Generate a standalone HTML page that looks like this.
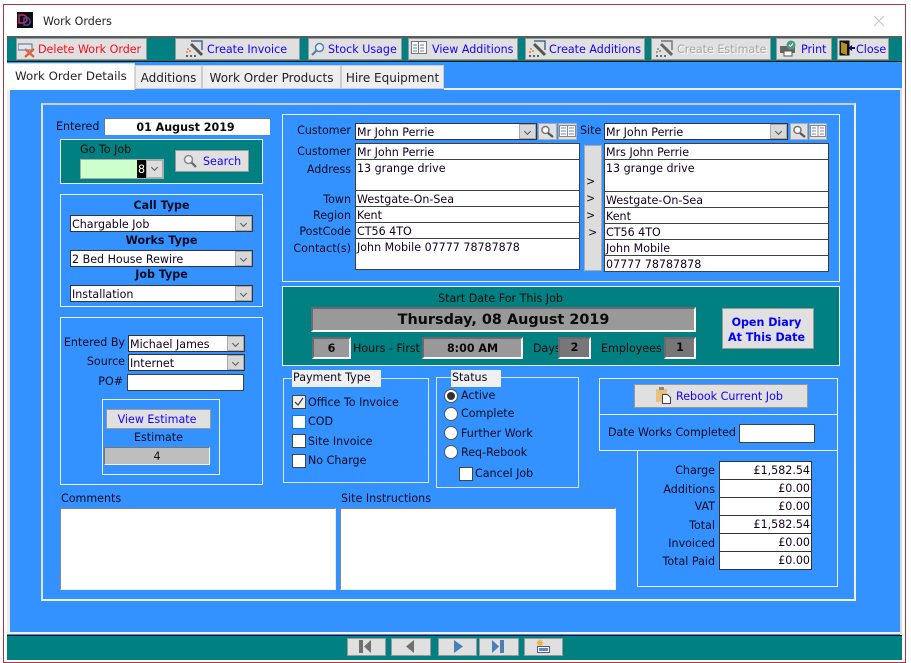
<!DOCTYPE html>
<html><head><meta charset="utf-8"><title>Work Orders</title>
<style>
html,body{margin:0;padding:0;background:#fff;}
body{width:911px;height:663px;position:relative;overflow:hidden;font:11.1px "DejaVu Sans","Liberation Sans",sans-serif;color:#0a0a20;}
div,svg{position:absolute;box-sizing:border-box;}
.t{white-space:nowrap;line-height:16px;height:16px;margin-top:1px;}
.r{text-align:right;}
.c{text-align:center;}
.bd{font-weight:bold;}
.btn{background:#e0e0e0;border:1px solid #999;color:#1400ff;white-space:nowrap;line-height:22px;}
.box{border:1px solid #eef2f8;}
.f{background:#fff;border:1px solid #404040;padding-left:1px;line-height:17px;white-space:nowrap;color:#100020;}
.cmb{background:#fff;border:1px solid #333;padding-left:1px;line-height:18px;white-space:nowrap;color:#100020;}
.arr{background:#d8d8d8;border:1px solid #aaa;right:0;top:0;bottom:0;width:17px;}
.arr:after{content:"";position:absolute;left:5px;top:4px;width:4px;height:4px;border-right:1px solid #555;border-bottom:1px solid #555;transform:rotate(45deg);}
.sm{background:#e0e0e0;border:1px solid #aaa;}
.g{background:#999;border:2px solid;border-color:#6a6a6a #fff #fff #6a6a6a;color:#0a0a0a;font-weight:bold;text-align:center;}
.chk{width:14px;height:14px;background:#fff;border:1px solid #444;}
.rad{width:14px;height:14px;background:#fff;border:1px solid #555;border-radius:50%;}
.tab{background:#eee;border:1px solid #ccc;text-align:center;font-size:12px;line-height:24px;color:#222;white-space:nowrap;}
.nav{background:#e0e0e0;border:1px solid #999;top:638px;height:18px;}
.fr{background:#fff;border:1px solid #333;text-align:right;padding-right:1px;line-height:18px;color:#100020;}
</style></head><body>

<!-- window frame -->
<div style="left:3px;top:4px;width:903px;height:659px;border:1px solid #a83a3f;background:#fff"></div>
<svg style="left:17px;top:12px" width="16" height="16" viewBox="0 0 16 16"><rect width="16" height="16" fill="#0c0c14"/><path d="M2 3h4a4 4 0 0 1 0 8H2z" fill="none" stroke="#c82a6a" stroke-width="1.5"/><path d="M7 6h4a4 4 0 0 1 0 7H7z" fill="none" stroke="#4a4a90" stroke-width="1.5"/></svg>
<div class="t" style="left:43px;top:13px;color:#222">Work Orders</div>
<svg style="left:873px;top:15px" width="12" height="12"><path d="M1 1l10 10M11 1L1 11" stroke="#c8c8c8" stroke-width="1.2"/></svg>

<!-- main backgrounds -->
<div style="left:7px;top:36px;width:895px;height:1px;background:#a83a3f"></div>
<div style="left:7px;top:37px;width:895px;height:24px;background:#008080"></div>
<div style="left:7px;top:61px;width:895px;height:1px;background:#111"></div>
<div style="left:7px;top:62px;width:895px;height:573px;background:#3392ff"></div>
<div style="left:900px;top:88px;width:2px;height:547px;background:#d8d8d8"></div>
<div style="left:7px;top:632px;width:893px;height:2px;background:#eef2f8"></div>
<div style="left:7px;top:635px;width:895px;height:1px;background:#111"></div>
<div style="left:7px;top:636px;width:895px;height:24px;background:#008080"></div>
<div style="left:7px;top:88px;width:3px;height:545px;background:#eee"></div>
<div style="left:444px;top:88px;width:456px;height:2px;background:#eef2f8"></div>

<!-- toolbar -->
<div class="btn" style="left:16px;top:38px;width:131px;height:22px;color:#ff0a1a;padding-left:21px">Delete Work Order</div>
<svg style="left:18px;top:41px" width="18" height="17"><rect x="0" y="3" width="14" height="6" fill="#dfe8f0" stroke="#5a6a80"/><path d="M7 8l9 8M16 8l-9 8" stroke="#e0603a" stroke-width="2.2"/></svg>
<div class="btn" style="left:175px;top:38px;width:125px;height:22px;padding-left:31px">Create Invoice</div>
<svg style="left:185px;top:40px" width="18" height="18"><path d="M6 1h11v9" fill="none" stroke="#4a6a90" stroke-width="1.5"/><path d="M6 4l11 11" stroke="#555" stroke-width="3"/><path d="M2 9h2M4 11h2M1 12h2" stroke="#e08040" stroke-width="1.6"/><path d="M1 16h2M5 16h2M9 16h2" stroke="#333" stroke-width="1.6"/></svg>
<div class="btn" style="left:308px;top:38px;width:94px;height:22px;padding-left:19px">Stock Usage</div>
<svg style="left:311px;top:42px" width="14" height="15"><circle cx="8.500" cy="5.500" r="4" fill="#e8f0f8" stroke="#5a80b0" stroke-width="1.5"/><path d="M5.500 8.500L1 13" stroke="#5a80b0" stroke-width="2.2"/></svg>
<div class="btn" style="left:408px;top:38px;width:110px;height:22px;padding-left:23px">View Additions</div>
<svg style="left:411px;top:41px" width="16" height="14"><path d="M.5.5h15v12H.5zM7.500.5v12" fill="#fff" stroke="#777"/><path d="M2 4h4M2 7h4M2 10h4M9 4h4M9 7h4M9 10h4" stroke="#5a80b0"/></svg>
<div class="btn" style="left:525px;top:38px;width:120px;height:22px;padding-left:23px">Create Additions</div>
<svg style="left:528px;top:40px" width="18" height="18"><path d="M6 1h11v9" fill="none" stroke="#4a6a90" stroke-width="1.5"/><path d="M6 4l11 11" stroke="#555" stroke-width="3"/><path d="M2 9h2M4 11h2M1 12h2" stroke="#e08040" stroke-width="1.6"/><path d="M1 16h2M5 16h2M9 16h2" stroke="#333" stroke-width="1.6"/></svg>
<div class="btn" style="left:651px;top:38px;width:120px;height:22px;padding-left:25px;color:#a6a6a6;text-shadow:1px 1px 0 #f8f8f8">Create Estimate</div>
<svg style="left:655px;top:40px" width="18" height="18"><path d="M6 1h11v9" fill="none" stroke="#777" stroke-width="1.5"/><path d="M6 4l11 11" stroke="#666" stroke-width="3"/><path d="M2 9h2M4 11h2M1 12h2" stroke="#888" stroke-width="1.6"/><path d="M1 16h2M5 16h2M9 16h2" stroke="#444" stroke-width="1.6"/></svg>
<div class="btn" style="left:776px;top:38px;width:56px;height:22px;padding-left:24px">Print</div>
<svg style="left:779px;top:40px" width="18" height="17"><rect x="1" y="6" width="15" height="7" fill="#666"/><rect x="5" y="11" width="8" height="5" fill="#fff" stroke="#555"/><circle cx="12" cy="5" r="4.500" fill="#4a9a80"/><path d="M10 5l1.500 1.500L14 3.500" stroke="#fff" fill="none"/></svg>
<div class="btn" style="left:837px;top:38px;width:52px;height:22px;padding-left:18px">Close</div>
<svg style="left:839px;top:40px" width="17" height="17"><rect x="0.500" y="0.500" width="10" height="15" fill="#111"/><path d="M2 2l6 2v11l-6-2z" fill="#b09020"/><path d="M16 7h-3V5l-4 3 4 3V9h3z" fill="#101060"/></svg>

<!-- tabs -->
<div style="left:7px;top:63px;width:128px;height:27px;background:#fff;border-top:1px solid #ddd;border-right:1px solid #ddd"></div>
<div class="t" style="left:15px;top:67px;font-size:11.8px;color:#222">Work Order Details</div>
<div class="tab" style="left:135px;top:65px;width:67px;height:24px">Additions</div>
<div class="tab" style="left:202px;top:65px;width:139px;height:24px">Work Order Products</div>
<div class="tab" style="left:341px;top:65px;width:103px;height:24px">Hire Equipment</div>

<!-- blue panel top strip -->
<div style="left:10px;top:90px;width:890px;height:542px;background:#3392ff"></div>
<div style="left:41px;top:103px;width:815px;height:498px;border:2px solid #eef2f8;border-top-color:#c8ced6;border-left-color:#dfe4ea"></div>

<!-- left column -->
<div class="t" style="left:56px;top:118px">Entered</div>
<div style="left:104px;top:118px;width:166px;height:17px;background:#fff;border-top:1px solid #777;border-left:1px solid #777;text-align:center;font-weight:bold;line-height:18px;color:#0a0a0a;padding-right:4px">01 August 2019</div>

<div class="box" style="left:60px;top:139px;width:203px;height:45px;background:#008080"></div>
<div class="t" style="left:80px;top:141px;color:#0a0a0a">Go To Job</div>
<div style="left:80px;top:159px;width:84px;height:20px;background:#ccffcc;border:1px solid #aaa"></div>
<div style="left:137px;top:160px;width:9px;height:18px;background:#000;color:#ffe;text-align:center;line-height:20px">8</div>
<div style="left:146px;top:160px;width:17px;height:18px" ><div class="arr" style="left:0;width:17px;background:#ddd"></div></div>
<div class="btn" style="left:175px;top:150px;width:74px;height:22px;padding-left:27px">Search</div>
<svg style="left:183px;top:154px" width="14" height="14"><circle cx="5.500" cy="5.500" r="4" fill="#eee" stroke="#888" stroke-width="1.5"/><path d="M8.500 8.500L13 13" stroke="#666" stroke-width="2.2"/></svg>

<div class="box" style="left:60px;top:194px;width:203px;height:113px"></div>
<div class="t c bd" style="left:60px;top:197px;width:203px;color:#0a0a20">Call Type</div>
<div class="cmb" style="left:70px;top:215px;width:183px;height:17px">Chargable Job<div class="arr"></div></div>
<div class="t c bd" style="left:60px;top:232px;width:203px">Works Type</div>
<div class="cmb" style="left:70px;top:250px;width:183px;height:17px">2 Bed House Rewire<div class="arr"></div></div>
<div class="t c bd" style="left:60px;top:266px;width:203px">Job Type</div>
<div class="cmb" style="left:70px;top:285px;width:183px;height:17px">Installation<div class="arr"></div></div>

<div class="box" style="left:60px;top:317px;width:203px;height:168px"></div>
<div class="t r" style="left:50px;top:334px;width:75px">Entered By</div>
<div class="cmb" style="left:128px;top:335px;width:117px;height:17px">Michael James<div class="arr"></div></div>
<div class="t r" style="left:50px;top:353px;width:75px">Source</div>
<div class="cmb" style="left:128px;top:354px;width:117px;height:17px">Internet<div class="arr"></div></div>
<div class="t r" style="left:50px;top:373px;width:73px">PO#</div>
<div class="f" style="left:127px;top:374px;width:117px;height:17px"></div>

<div style="left:102px;top:399px;width:118px;height:76px;border:1px solid #eef2f8"></div>
<div class="btn c" style="left:106px;top:409px;width:105px;height:20px;line-height:20px;padding-right:3px">View Estimate</div>
<div class="t c" style="left:106px;top:429px;width:105px">Estimate</div>
<div style="left:104px;top:447px;width:106px;height:18px;background:#bebebe;border:1px solid;border-color:#777 #fff #fff #777;text-align:center;line-height:18px;color:#111">4</div>

<div class="t" style="left:61px;top:490px">Comments</div>
<div style="left:60px;top:508px;width:276px;height:82px;background:#fff;border:1px solid #888;border-right-color:#eee;border-bottom-color:#eee"></div>
<div class="t" style="left:341px;top:490px">Site Instructions</div>
<div style="left:340px;top:508px;width:276px;height:82px;background:#fff;border:1px solid #888;border-right-color:#eee;border-bottom-color:#eee"></div>

<!-- customer box -->
<div class="box" style="left:282px;top:114px;width:558px;height:168px"></div>
<div class="t r" style="left:280px;top:122px;width:71px">Customer</div>
<div class="cmb" style="left:355px;top:123px;width:182px;height:17px">Mr John Perrie<div class="arr"></div></div>
<div class="sm" style="left:538px;top:123px;width:19px;height:17px"></div>
<svg style="left:540px;top:125px" width="14" height="13"><circle cx="5.500" cy="5" r="3.500" fill="#fff" stroke="#777" stroke-width="1.5"/><path d="M8 8l5 4" stroke="#555" stroke-width="2.2"/></svg>
<div class="sm" style="left:558px;top:123px;width:19px;height:17px"></div>
<svg style="left:559px;top:125px" width="17" height="13"><path d="M.5.5h16v11H.5zM8.500.5v11" fill="#fff" stroke="#888"/><path d="M2 3h5M2 6h5M2 9h5M10 3h5M10 6h5M10 9h5" stroke="#6a88b8"/></svg>
<div class="t r" style="left:280px;top:143px;width:71px">Customer</div>
<div class="t r" style="left:280px;top:161px;width:71px">Address</div>
<div class="t r" style="left:280px;top:191px;width:71px">Town</div>
<div class="t r" style="left:280px;top:207px;width:71px">Region</div>
<div class="t r" style="left:280px;top:223px;width:71px">PostCode</div>
<div class="t r" style="left:280px;top:240px;width:71px">Contact(s)</div>
<div class="f" style="left:355px;top:143px;width:225px;height:17px">Mr John Perrie</div>
<div class="f" style="left:355px;top:159px;width:225px;height:32px">13 grange drive</div>
<div class="f" style="left:355px;top:190px;width:225px;height:17px">Westgate-On-Sea</div>
<div class="f" style="left:355px;top:206px;width:225px;height:17px">Kent</div>
<div class="f" style="left:355px;top:222px;width:225px;height:17px">CT56 4TO</div>
<div class="f" style="left:355px;top:238px;width:225px;height:32px">John Mobile 07777 78787878</div>

<div class="t" style="left:580px;top:122px">Site</div>
<div class="cmb" style="left:604px;top:123px;width:184px;height:17px">Mr John Perrie<div class="arr"></div></div>
<div class="sm" style="left:790px;top:123px;width:18px;height:17px"></div>
<svg style="left:792px;top:125px" width="14" height="13"><circle cx="5.500" cy="5" r="3.500" fill="#fff" stroke="#777" stroke-width="1.5"/><path d="M8 8l5 4" stroke="#555" stroke-width="2.2"/></svg>
<div class="sm" style="left:809px;top:123px;width:18px;height:17px"></div>
<svg style="left:810px;top:125px" width="16" height="13"><path d="M.5.5h15v11H.5zM8 .5v11" fill="#fff" stroke="#888"/><path d="M2 3h4M2 6h4M2 9h4M10 3h4M10 6h4M10 9h4" stroke="#6a88b8"/></svg>
<div style="left:584px;top:145px;width:18px;height:126px;background:#ddd;border:1px solid #aaa"></div>
<div class="t" style="left:586px;top:173px">&gt;</div>
<div class="t" style="left:586px;top:190px">&gt;</div>
<div class="t" style="left:586px;top:207px">&gt;</div>
<div class="t" style="left:588px;top:224px">&gt;</div>
<div class="f" style="left:604px;top:143px;width:225px;height:17px">Mrs John Perrie</div>
<div class="f" style="left:604px;top:159px;width:225px;height:33px">13 grange drive</div>
<div class="f" style="left:604px;top:191px;width:225px;height:17px">Westgate-On-Sea</div>
<div class="f" style="left:604px;top:207px;width:225px;height:17px">Kent</div>
<div class="f" style="left:604px;top:223px;width:225px;height:17px">CT56 4TO</div>
<div class="f" style="left:604px;top:239px;width:225px;height:17px">John Mobile</div>
<div class="f" style="left:604px;top:255px;width:225px;height:17px">07777 78787878</div>

<!-- date box -->
<div class="box" style="left:282px;top:286px;width:558px;height:80px;background:#008080"></div>
<div class="t c" style="left:308px;top:290px;width:385px;color:#0a0a0a">Start Date For This Job</div>
<div class="g" style="left:311px;top:307px;width:385px;height:25px;font-size:14.4px;line-height:23px">Thursday, 08 August 2019</div>
<div class="g" style="left:312px;top:337px;width:39px;height:22px;line-height:20px">6</div>
<div class="t" style="left:353px;top:340px;color:#0a0a0a">Hours - First</div>
<div class="g" style="left:422px;top:337px;width:101px;height:22px;line-height:20px">8:00 AM</div>
<div class="t" style="left:533px;top:340px;color:#0a0a0a">Days</div>
<div class="g" style="left:558px;top:337px;width:33px;height:22px;line-height:18px;background:#777">2</div>
<div class="t" style="left:601px;top:340px;color:#0a0a0a">Employees</div>
<div class="g" style="left:664px;top:337px;width:32px;height:22px;line-height:18px;background:#777">1</div>
<div class="btn c bd" style="left:722px;top:308px;width:92px;height:41px;color:#0000ff;line-height:15px;padding-top:6px;padding-right:3px">Open Diary<br>At This Date</div>

<!-- payment -->
<div style="left:283px;top:378px;width:146px;height:105px;border:1px solid #dfe4ea"></div>
<div class="t" style="left:292px;top:369px;width:89px;height:17px;background:#f0f0f0;padding-left:1px">Payment Type</div>
<div class="chk" style="left:292px;top:395px;background:#f0f0f0"></div>
<svg style="left:292px;top:395px" width="14" height="14"><path d="M3 7l3 3 5-7" fill="none" stroke="#444" stroke-width="1.3"/></svg>
<div class="t" style="left:308px;top:394px">Office To Invoice</div>
<div class="chk" style="left:292px;top:415px;border-color:#0a78e0"></div>
<div class="t" style="left:308px;top:413px">COD</div>
<div class="chk" style="left:292px;top:434px"></div>
<div class="t" style="left:308px;top:433px">Site Invoice</div>
<div class="chk" style="left:292px;top:454px"></div>
<div class="t" style="left:308px;top:452px">No Charge</div>

<!-- status -->
<div style="left:436px;top:377px;width:143px;height:111px;border:1px solid #dfe4ea"></div>
<div class="t" style="left:451px;top:369px;width:50px;height:17px;background:#f0f0f0;padding-left:1px">Status</div>
<div class="rad" style="left:444px;top:389px"></div>
<div style="left:447px;top:392px;width:8px;height:8px;border-radius:50%;background:#333"></div>
<div class="t" style="left:461px;top:387px">Active</div>
<div class="rad" style="left:444px;top:407px"></div>
<div class="t" style="left:461px;top:405px">Complete</div>
<div class="rad" style="left:444px;top:426px"></div>
<div class="t" style="left:461px;top:425px">Further Work</div>
<div class="rad" style="left:444px;top:445px"></div>
<div class="t" style="left:461px;top:444px">Req-Rebook</div>
<div class="chk" style="left:459px;top:467px"></div>
<div class="t" style="left:475px;top:465px">Cancel Job</div>

<!-- right lower -->
<div style="left:599px;top:378px;width:239px;height:37px;border:1px solid #eef2f8"></div>
<div class="btn" style="left:634px;top:384px;width:174px;height:24px;padding-left:41px;line-height:23px">Rebook Current Job</div>
<svg style="left:655px;top:386px" width="17" height="18"><rect x="1" y="3" width="11" height="13" fill="#e8c080"/><rect x="4" y="1" width="5" height="3" fill="#888"/><path d="M7.500 8.500h5l3 3v6h-8z" fill="#fff" stroke="#444"/></svg>
<div style="left:599px;top:414px;width:239px;height:37px;border:1px solid #eef2f8"></div>
<div class="t" style="left:608px;top:424px">Date Works Completed</div>
<div class="f" style="left:739px;top:424px;width:76px;height:19px"></div>
<div style="left:637px;top:450px;width:201px;height:137px;border:1px solid #eef2f8"></div>
<div class="t r" style="left:640px;top:462px;width:75px">Charge</div>
<div class="t r" style="left:640px;top:481px;width:75px">Additions</div>
<div class="t r" style="left:640px;top:498px;width:75px">VAT</div>
<div class="t r" style="left:640px;top:517px;width:75px">Total</div>
<div class="t r" style="left:640px;top:535px;width:75px">Invoiced</div>
<div class="t r" style="left:640px;top:553px;width:75px">Total Paid</div>
<div class="fr" style="left:719px;top:461px;width:93px;height:19px">£1,582.54</div>
<div class="fr" style="left:719px;top:479px;width:93px;height:19px">£0.00</div>
<div class="fr" style="left:719px;top:497px;width:93px;height:19px">£0.00</div>
<div class="fr" style="left:719px;top:515px;width:93px;height:19px">£1,582.54</div>
<div class="fr" style="left:719px;top:533px;width:93px;height:19px">£0.00</div>
<div class="fr" style="left:719px;top:551px;width:93px;height:19px">£0.00</div>

<!-- nav -->
<div class="nav" style="left:347px;width:39px"></div>
<svg style="left:358px;top:639px" width="16" height="15"><path d="M1 1h4v13H1zM13 1v13L6 7.500z" fill="#707070"/></svg>
<div class="nav" style="left:391px;width:40px"></div>
<svg style="left:404px;top:639px" width="14" height="15"><path d="M10 1v13L2 7.500z" fill="#707070"/></svg>
<div class="nav" style="left:438px;width:39px"></div>
<svg style="left:452px;top:639px" width="14" height="15"><path d="M2 1v13l9-6.500z" fill="#4a80b8"/></svg>
<div class="nav" style="left:479px;width:40px"></div>
<svg style="left:491px;top:639px" width="16" height="15"><path d="M1 1v13l7-6.500zM9 1h4v13H9z" fill="#4a80b8"/></svg>
<div class="nav" style="left:524px;width:39px"></div>
<svg style="left:535px;top:638px" width="18" height="17"><path d="M5 1l1 2 2-1-1 2 2 1-2 1 1 2-2-1-1 2-1-2-2 1 1-2-2-1 2-1-1-2 2 1z" fill="#e8b050"/><rect x="2.500" y="8.500" width="12" height="6" fill="#fff" stroke="#505a70"/><rect x="4" y="10" width="9" height="3" fill="#5a8ac8"/></svg>

</body></html>
